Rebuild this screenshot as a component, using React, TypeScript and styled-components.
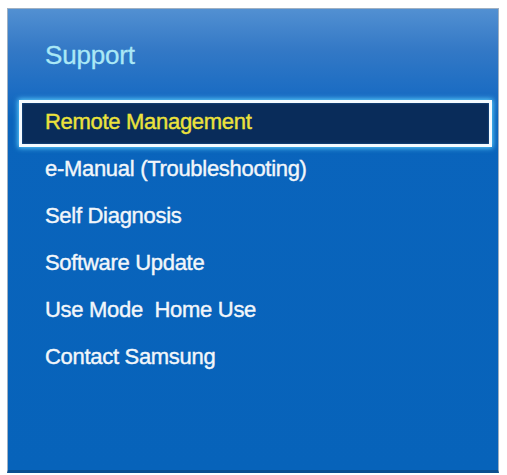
import React from "react";
import styled, { createGlobalStyle } from "styled-components";

const GlobalStyle = createGlobalStyle`
  html, body {
    margin: 0;
    padding: 0;
    background: #ffffff;
  }
  body {
    font-family: "Liberation Sans", Arial, sans-serif;
  }
`;

const Page = styled.div`
  width: 507px;
  height: 475px;
  padding: 8px 8px 0 7px;
  box-sizing: border-box;
  background: #ffffff;
`;

const Panel = styled.div`
  height: 465px;
  box-sizing: border-box;
  border: 1px solid #9fb0c2;
  border-bottom: 3px solid #0b4f90;
  padding: 31px 6px 0 11px;
  background: linear-gradient(
    180deg,
    #5290d2 0px,
    #3479c6 40px,
    #1a6cc3 85px,
    #0a64bc 110px,
    #0763ba 100%
  );
  display: flex;
  flex-direction: column;
`;

const Title = styled.h2`
  margin: 0 0 30px;
  padding-left: 26px;
  font-size: 26px;
  line-height: 30px;
  font-weight: normal;
  color: #aae8f6;
  letter-spacing: -0.2px;
  -webkit-text-stroke: 0.3px currentColor;
`;

const Menu = styled.ul`
  list-style: none;
  margin: 0;
  padding: 0;
  display: flex;
  flex-direction: column;
`;

const Row = styled.li<{ $selected?: boolean }>`
  height: 47px;
  box-sizing: border-box;
  padding: 0 0 6px 23px;
  line-height: 38px;
  font-size: 22px;
  letter-spacing: -0.3px;
  white-space: pre;
  -webkit-text-stroke: 0.4px currentColor;
  border: 3px solid ${(p) => (p.$selected ? "#f4fbff" : "transparent")};
  background: ${(p) => (p.$selected ? "#092c5a" : "transparent")};
  color: ${(p) => (p.$selected ? "#ece23c" : "#f2f6fa")};
  box-shadow: ${(p) =>
    p.$selected ? "0 0 5px 1px #5ed2ff, inset 0 0 2px #2a6fb0" : "none"};
`;

const items = [
  "Remote Management",
  "e-Manual (Troubleshooting)",
  "Self Diagnosis",
  "Software Update",
  "Use Mode  Home Use",
  "Contact Samsung",
];

export default function App() {
  return (
    <>
      <GlobalStyle />
      <Page>
        <Panel>
          <Title>Support</Title>
          <Menu>
            {items.map((label, i) => (
              <Row key={label} $selected={i === 0}>
                {label}
              </Row>
            ))}
          </Menu>
        </Panel>
      </Page>
    </>
  );
}
